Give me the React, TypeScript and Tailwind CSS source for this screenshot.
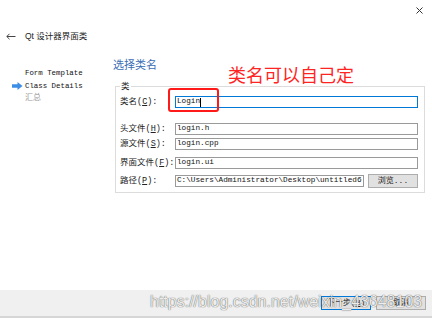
import React from 'react';

const mono = "font-['Liberation_Mono','Noto_Sans_CJK_SC',monospace]";
const cjk = "font-['Liberation_Sans','Noto_Sans_CJK_SC',sans-serif]";

function Field({
  label,
  mnemonic,
  value,
  focused = false,
  className = '',
}: {
  label: string;
  mnemonic: string;
  value: string;
  focused?: boolean;
  className?: string;
}) {
  return (
    <div className={`flex items-center h-[12px] ${className}`}>
      <div className={`w-[55px] shrink-0 text-[8.5px] leading-[12px] text-[#222] ${mono}`}>
        {label}(<span className="underline">{mnemonic}</span>):
      </div>
      <div
        className={`flex-1 h-[12px] border bg-white pl-[1px] flex items-center overflow-hidden whitespace-nowrap text-[7.7px] text-[#111] ${mono} ${
          focused ? 'border-[#0078d7]' : 'border-[#9a9a9a]'
        }`}
      >
        {value}
        {focused && <span className="w-px h-[9px] bg-black" />}
      </div>
    </div>
  );
}

export default function App() {
  return (
    <div className="relative w-[432px] h-[318px] bg-white flex flex-col overflow-hidden">
      {/* window close */}
      <div className="h-[26px] flex justify-end pt-[7px] pr-[9px]">
        <svg width="7" height="7" viewBox="0 0 7 7">
          <path d="M0.5 0.5 L6.5 6.5 M6.5 0.5 L0.5 6.5" stroke="#333" strokeWidth="1" />
        </svg>
      </div>

      {/* title */}
      <div className="h-[20px] flex items-center pl-[6px]">
        <svg width="10" height="7" viewBox="0 0 10 7" className="mr-[9px]">
          <path d="M9.5 3.5 H1 M3.5 0.8 L0.8 3.5 L3.5 6.2" stroke="#444" strokeWidth="1" fill="none" />
        </svg>
        <span className={`text-[8.5px] leading-[12px] text-[#222] ${cjk}`}>Qt 设计器界面类</span>
      </div>

      {/* main */}
      <div className="flex-1 flex">
        <div className={`w-[113px] shrink-0 pt-[21px] text-[7.4px] leading-[12.5px] text-[#111] ${mono}`}>
          <div className="pl-[25px]">Form Template</div>
          <div className="flex items-center">
            <svg width="11" height="8" viewBox="0 0 11 8" className="ml-[12px] mr-[2px]">
              <path d="M0 2.2 H5.5 V0 L10.5 4 L5.5 8 V5.8 H0 Z" fill="#3d8ee6" />
            </svg>
            <span>Class Details</span>
          </div>
          <div className={`pl-[25px] text-[#9a9a9a] text-[8px] ${cjk}`}>汇总</div>
        </div>

        <div className="flex-1 pt-[12px] pr-[7px]">
          <div className={`h-[14px] text-[11px] leading-[14px] text-[#3a6db4] ${cjk}`}>选择类名</div>
          <div className="relative ml-[2px] mt-[14px] border border-[#dcdcdc] pl-[4px] pr-[6px] pt-[9px] pb-[4px]">
            <span className={`absolute left-[4px] top-[-7px] bg-white px-px text-[8.5px] leading-[12px] text-[#222] ${cjk}`}>
              类
            </span>
            <Field label="类名" mnemonic="C" value="Login" focused />
            <Field label="头文件" mnemonic="H" value="login.h" className="mt-[15px]" />
            <Field label="源文件" mnemonic="S" value="login.cpp" className="mt-[3px]" />
            <Field label="界面文件" mnemonic="F" value="login.ui" className="mt-[7px]" />
            <div className="flex items-center h-[14px] mt-[5px]">
              <div className={`w-[55px] shrink-0 text-[8.5px] leading-[12px] text-[#222] ${mono}`}>
                路径(<span className="underline">P</span>):
              </div>
              <div
                className={`flex-1 h-[12px] border border-[#9a9a9a] bg-white pl-[1px] flex items-center overflow-hidden whitespace-nowrap text-[7.7px] text-[#111] ${mono}`}
              >
                C:\Users\Administrator\Desktop\untitled6
              </div>
              <button
                className={`ml-[4px] w-[50px] h-[14px] border border-[#adadad] bg-[#e1e1e1] text-[8px] leading-[12px] text-[#222] ${mono}`}
              >
                浏览...
              </button>
            </div>
          </div>
        </div>
      </div>

      {/* bottom buttons */}
      <div className="h-[28px] bg-[#f0f0f0] border-b-2 border-[#d6d6d6] flex items-start justify-end pt-[6px] pr-[6px] gap-[5px]">
        <button
          className={`w-[50px] h-[14px] border border-[#0078d7] bg-[#e1e1e1] text-[8px] leading-[12px] text-[#222] ${mono}`}
        >
          下一步(<span className="underline">N</span>)
        </button>
        <button
          className={`w-[50px] h-[14px] border border-[#adadad] bg-[#e1e1e1] text-[8px] leading-[12px] text-[#222] ${mono}`}
        >
          取消
        </button>
      </div>

      {/* annotations */}
      <div className="absolute left-[168px] top-[88px] w-[51px] h-[24px] border-2 border-[#ff1a1a] rounded-[3px]" />
      <div className={`absolute left-[228px] top-[64px] text-[18px] leading-[24px] text-[#ff2424] ${cjk}`}>
        类名可以自己定
      </div>
      <div className="absolute left-[150px] top-[292px] text-[16px] leading-[20px] text-white/90 font-['Liberation_Sans',sans-serif] [text-shadow:0_0_1px_rgba(0,0,0,0.6),0_0_1px_rgba(0,0,0,0.4)]">
        https://blog.csdn.net/weixin_43648103
      </div>
    </div>
  );
}
